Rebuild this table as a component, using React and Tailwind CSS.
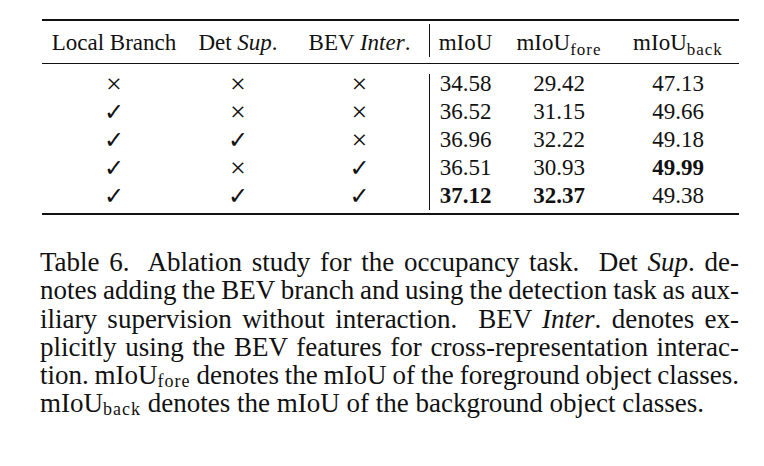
import React from "react";

const X = () => <span className="text-[28px] leading-none">×</span>;
const C = () => (
  <span className="font-['DejaVu_Sans',sans-serif] text-[24px] leading-none">✓</span>
);

const rows = [
  [0, 0, 0, ["34.58"], ["29.42"], ["47.13"]],
  [1, 0, 0, ["36.52"], ["31.15"], ["49.66"]],
  [1, 1, 0, ["36.96"], ["32.22"], ["49.18"]],
  [1, 0, 1, ["36.51"], ["30.93"], ["49.99", true]],
  [1, 1, 1, ["37.12", true], ["32.37", true], ["49.38"]],
];

function Sub({ children, size = "text-[17px]", off = "top-[5px]" }) {
  return (
    <span className={`${size} ${off} leading-none relative tracking-[1px] [word-spacing:0]`}>{children}</span>
  );
}

function Num({ v }) {
  return <span className={v[1] ? "font-bold" : ""}>{v[0]}</span>;
}

function Table() {
  return (
    <div className="ml-[42px] mt-[19px] w-[697px] text-[23px] leading-[28px]">
      <div className="flex border-t-2 border-b border-[#111]">
        <div className="w-[144px] text-center pt-[8px] pb-[6px]">Local Branch</div>
        <div className="w-[104px] text-center pt-[8px] pb-[6px]">
          Det <i>Sup</i>.
        </div>
        <div className="w-[139px] text-center pt-[8px] pb-[6px]">
          BEV <i>Inter</i>.
        </div>
        <div className="w-px bg-[#111] mt-[3px] h-[33px]" />
        <div className="w-[71px] text-center pt-[8px] pb-[6px]">mIoU</div>
        <div className="w-[116px] text-center pt-[8px] pb-[6px]">
          mIoU<Sub>fore</Sub>
        </div>
        <div className="w-[122px] text-center pt-[8px] pb-[6px]">
          mIoU<Sub>back</Sub>
        </div>
      </div>
      <div className="flex border-b-2 border-[#111] pt-[6px] pb-[3px]">
        <div className="flex flex-col">
          {rows.map((r, i) => (
            <div key={i} className="flex h-[28px] items-center">
              <div className="w-[144px] flex justify-center">{r[0] ? <C /> : <X />}</div>
              <div className="w-[104px] flex justify-center">{r[1] ? <C /> : <X />}</div>
              <div className="w-[139px] flex justify-center">{r[2] ? <C /> : <X />}</div>
            </div>
          ))}
        </div>
        <div className="w-px bg-[#111] mt-[4px] h-[136px]" />
        <div className="flex flex-col">
          {rows.map((r, i) => (
            <div key={i} className="flex h-[28px]">
              <div className="w-[71px] text-center"><Num v={r[3]} /></div>
              <div className="w-[116px] text-center"><Num v={r[4]} /></div>
              <div className="w-[122px] text-center"><Num v={r[5]} /></div>
            </div>
          ))}
        </div>
      </div>
    </div>
  );
}

const J = "text-justify [text-align-last:justify] [word-spacing:-2px]";

function Caption() {
  return (
    <div className="ml-[40px] mt-[33px] w-[699px] text-[27px] leading-[28.3px]">
      <div className={J}>
        Table 6.&nbsp; Ablation study for the occupancy task.&nbsp; Det <i>Sup</i>. de-
      </div>
      <div className={J}>notes adding the BEV branch and using the detection task as aux-</div>
      <div className={J}>
        iliary supervision without interaction.&nbsp; BEV <i>Inter</i>. denotes ex-
      </div>
      <div className={J}>plicitly using the BEV features for cross-representation interac-</div>
      <div className={J}>
        tion. mIoU<Sub size="text-[18px]" off="top-[3px]">fore</Sub> denotes the mIoU of the foreground object classes.
      </div>
      <div>
        mIoU<Sub size="text-[18px]" off="top-[3px]">back</Sub> denotes the mIoU of the background object classes.
      </div>
    </div>
  );
}

export default function App() {
  return (
    <div className="w-[764px] h-[466px] overflow-hidden bg-white text-[#111] font-['Liberation_Serif','Times_New_Roman',serif]">
      <Table />
      <Caption />
    </div>
  );
}
